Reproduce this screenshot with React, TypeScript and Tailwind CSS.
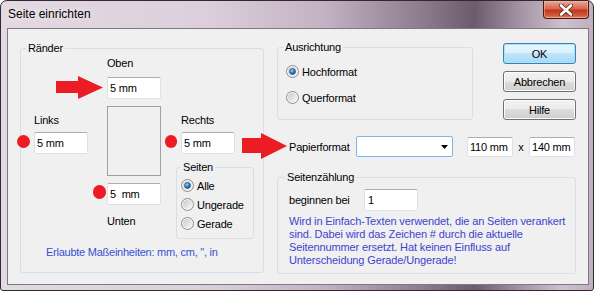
import React from "react";

const Radio = ({ checked, id }: { checked?: boolean; id: string }) => (
  <svg width="13" height="13" viewBox="0 0 13 13" className="shrink-0">
    <defs>
      <linearGradient id={`o${id}`} x1="0" y1="0" x2="1" y2="1">
        <stop offset="0" stopColor="#c9c9c9" />
        <stop offset="1" stopColor="#f9f9f9" />
      </linearGradient>
      <radialGradient id={`b${id}`} cx="0.4" cy="0.35" r="0.75">
        <stop offset="0" stopColor="#9fdcfb" />
        <stop offset="0.45" stopColor="#2e88c8" />
        <stop offset="1" stopColor="#0c3c70" />
      </radialGradient>
    </defs>
    <circle cx="6.5" cy="6.5" r="6" fill="#f4f4f4" stroke="#8d8d8d" />
    <circle cx="6.5" cy="6.5" r="4.5" fill={`url(#o${id})`} />
    {checked && <circle cx="6.5" cy="6.5" r="3" fill={`url(#b${id})`} stroke="#1d4f7e" strokeWidth="0.6" />}
  </svg>
);

const inputCls =
  "bg-white border border-[#dde1e6] border-t-[#abadb3] rounded-[2px] flex items-center text-black";

export default function App() {
  return (
    <div className="w-[595px] h-[293px] bg-white relative font-['Liberation_Sans',Arial,sans-serif] text-[11px] leading-[14px] tracking-[-0.2px] text-black">
      <div className="w-[594px] h-[291px] relative rounded-t-[7px] rounded-b-[3px] border border-[#2f2a30] bg-[linear-gradient(to_right,#e3d9e2_0%,#dccfdb_35%,#c2b1c2_55%,#8a788b_72%,#6b5b6c_80%,#a595a6_88%,#cfc1cf_95%,#bfaebf_100%)] flex flex-col">
        {/* title bar */}
        <div className="h-[27px] flex items-center pl-[7px] pb-[1px] text-[12px] tracking-normal [text-shadow:0_0_6px_rgba(255,255,255,0.9)]">
          Seite einrichten
        </div>
        {/* close button */}
        <div className="absolute top-0 right-[4px] w-[46px] h-[18px] rounded-b-[4px] border border-t-0 border-[#4b1810] bg-[linear-gradient(to_bottom,#e9a996_0%,#d9664f_45%,#c3361c_55%,#cf5a3e_85%,#e08b6d_100%)] flex items-center justify-center shadow-[inset_0_0_0_1px_rgba(255,200,180,0.45)]">
          <svg width="14" height="12" viewBox="0 0 14 12">
            <path d="M2 1.5 L12 10.5 M12 1.5 L2 10.5" stroke="#5a2418" strokeWidth="4.2" strokeLinecap="round" />
            <path d="M2 1.5 L12 10.5 M12 1.5 L2 10.5" stroke="#ffffff" strokeWidth="2.6" strokeLinecap="round" />
          </svg>
        </div>
        {/* client */}
        <div className="ml-[6px] mr-[4px] h-[257px] border border-[#7d7a7f] bg-[#f0f0f0] flex items-start">
          {/* Ränder */}
          <fieldset className="ml-[12px] mt-[12px] w-[244px] h-[232px] border border-[#d5dfe5] rounded-[3px] shrink-0">
            <legend className="ml-[5px] px-[2px] leading-[14px]">Ränder</legend>
            <div className="flex items-start">
              {/* col 1 */}
              <div className="ml-[13px] w-[54px] flex flex-col">
                <div className="mt-[58px] leading-[14px]">Links</div>
                <div className={`${inputCls} mt-[5px] w-[54px] h-[22px] pl-[2px]`}>5 mm</div>
              </div>
              {/* col 2 */}
              <div className="ml-[19px] w-[54px] flex flex-col">
                <div className="mt-[1px] leading-[14px]">Oben</div>
                <div className={`${inputCls} mt-[7px] w-[54px] h-[22px] pl-[2px]`}>5 mm</div>
                <div className="mt-[7px] w-[54px] h-[70px] border border-[#a0a0a0]" />
                <div className={`${inputCls} mt-[7px] w-[54px] h-[22px] pl-[2px] whitespace-pre`}>5  mm</div>
                <div className="mt-[9px] leading-[14px]">Unten</div>
              </div>
              {/* col 3 */}
              <div className="ml-[15px] w-[78px] flex flex-col">
                <div className="mt-[58px] ml-[5px] leading-[14px]">Rechts</div>
                <div className={`${inputCls} mt-[5px] ml-[5px] w-[54px] h-[22px] pl-[2px]`}>5 mm</div>
                <fieldset className="mt-[6px] w-[78px] h-[79px] border border-[#d5dfe5] rounded-[3px]">
                  <legend className="ml-[4px] px-[2px] leading-[14px]">Seiten</legend>
                  <div className="mt-[2px] flex flex-col">
                    <div className="h-[19px] flex items-center ml-[4px] gap-[3px]">
                      <Radio checked id="r1" />
                      <span>Alle</span>
                    </div>
                    <div className="h-[19px] flex items-center ml-[4px] gap-[3px]">
                      <Radio id="r2" />
                      <span>Ungerade</span>
                    </div>
                    <div className="h-[19px] flex items-center ml-[4px] gap-[3px]">
                      <Radio id="r3" />
                      <span>Gerade</span>
                    </div>
                  </div>
                </fieldset>
              </div>
            </div>
            <div className="mt-[6px] ml-[25px] text-[#3550d4] leading-[14px] tracking-[-0.25px]">
              Erlaubte Maßeinheiten: mm, cm, ", in
            </div>
          </fieldset>

          {/* right column */}
          <div className="ml-[13px] mt-[11px] w-[299px] flex flex-col shrink-0">
            <div className="flex items-start h-[80px]">
              <fieldset className="w-[196px] h-[80px] border border-[#d5dfe5] rounded-[3px]">
                <legend className="ml-[5px] px-[2px] leading-[14px]">Ausrichtung</legend>
                <div className="mt-[8px] flex flex-col gap-[7px]">
                  <div className="h-[19px] flex items-center ml-[8px] gap-[3px]">
                    <Radio checked id="r4" />
                    <span>Hochformat</span>
                  </div>
                  <div className="h-[19px] flex items-center ml-[8px] gap-[3px]">
                    <Radio id="r5" />
                    <span>Querformat</span>
                  </div>
                </div>
              </fieldset>
              <div className="ml-[30px] mt-[3px] w-[73px] flex flex-col gap-[7px]">
                <div className="h-[21px] rounded-[3px] border border-[#3c7fb1] bg-[linear-gradient(to_bottom,#eaf6fd_0%,#d9f0fc_50%,#bee6fd_50%,#a7d9f5_100%)] shadow-[inset_0_0_0_1px_#a8e4fb] flex items-center justify-center">
                  OK
                </div>
                <div className="h-[21px] rounded-[3px] border border-[#707070] bg-[linear-gradient(to_bottom,#f2f2f2_0%,#ebebeb_50%,#dddddd_50%,#cfcfcf_100%)] shadow-[inset_0_0_0_1px_#fcfcfc] flex items-center justify-center">
                  Abbrechen
                </div>
                <div className="h-[21px] rounded-[3px] border border-[#707070] bg-[linear-gradient(to_bottom,#f2f2f2_0%,#ebebeb_50%,#dddddd_50%,#cfcfcf_100%)] shadow-[inset_0_0_0_1px_#fcfcfc] flex items-center justify-center">
                  Hilfe
                </div>
              </div>
            </div>

            {/* Papierformat */}
            <div className="mt-[16px] h-[21px] flex items-center">
              <div className="ml-[12px] w-[67px]">Papierformat</div>
              <div className="w-[97px] h-[21px] bg-white border border-[#7eb4ea] rounded-[2px] flex items-center justify-end pr-[4px]">
                <svg width="7" height="4" viewBox="0 0 7 4">
                  <path d="M0 0 L7 0 L3.5 4 Z" fill="#000" />
                </svg>
              </div>
              <div className={`${inputCls} ml-[14px] w-[46px] h-[20px] pl-[2px]`}>110 mm</div>
              <div className="w-[16px] text-center">x</div>
              <div className={`${inputCls} w-[46px] h-[20px] pl-[2px]`}>140 mm</div>
            </div>

            {/* Seitenzählung */}
            <fieldset className="mt-[13px] w-[299px] h-[104px] border border-[#d5dfe5] rounded-[3px]">
              <legend className="ml-[7px] px-[2px] leading-[14px]">Seitenzählung</legend>
              <div className="mt-[5px] flex items-center">
                <div className="ml-[11px] w-[75px]">beginnen bei</div>
                <div className={`${inputCls} w-[54px] h-[22px] pl-[3px]`}>1</div>
              </div>
              <div className="mt-[4px] ml-[11px] text-[#3d43d0] leading-[13px] tracking-[-0.12px] whitespace-nowrap">
                Wird in Einfach-Texten verwendet, die an Seiten verankert
                <br />
                sind. Dabei wird das Zeichen # durch die aktuelle
                <br />
                Seitennummer ersetzt. Hat keinen Einfluss auf
                <br />
                Unterscheidung Gerade/Ungerade!
              </div>
            </fieldset>
          </div>
        </div>
      </div>

      {/* red annotations */}
      <svg className="absolute left-[56px] top-[76px]" width="47" height="23" viewBox="0 0 47 23">
        <path d="M0 5 H22 V0 L47 11.5 L22 23 V17 H0 Z" fill="#ec1c24" />
      </svg>
      <svg className="absolute left-[242px] top-[133px]" width="46" height="26" viewBox="0 0 46 26">
        <path d="M0 5 H19 V0 L45 13 L19 26 V20 H0 Z" fill="#ec1c24" />
      </svg>
      <div className="absolute left-[17px] top-[135px] w-[13px] h-[13px] rounded-full bg-[#ec1c24]" />
      <div className="absolute left-[165px] top-[135px] w-[12px] h-[13px] rounded-full bg-[#ec1c24]" />
      <div className="absolute left-[93px] top-[185px] w-[13px] h-[14px] rounded-full bg-[#ec1c24]" />
    </div>
  );
}
